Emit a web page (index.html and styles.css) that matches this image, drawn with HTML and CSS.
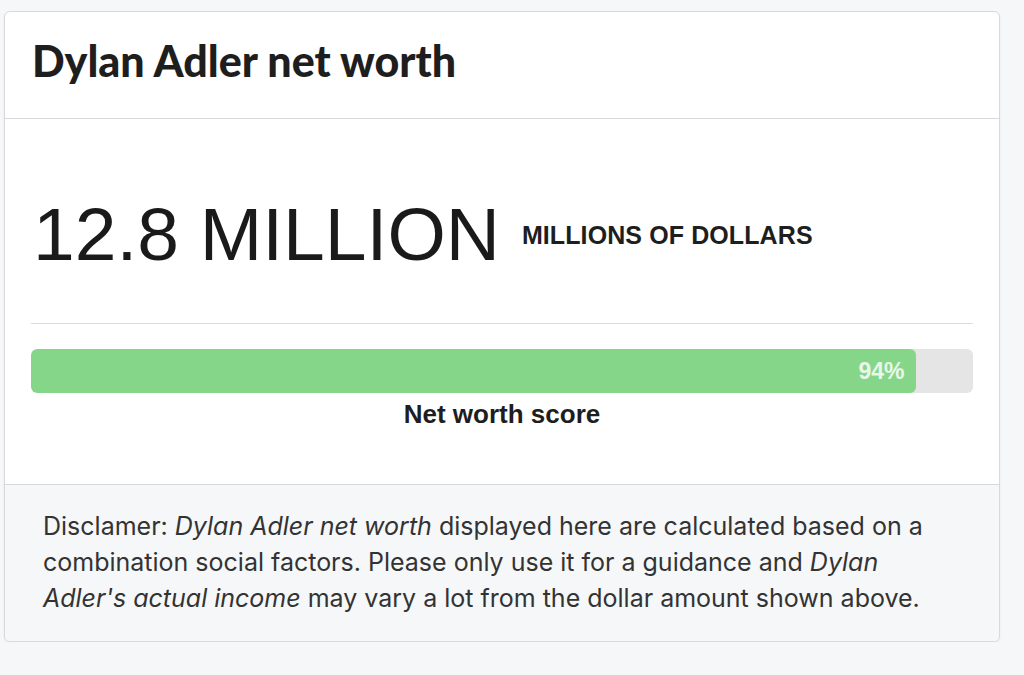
FILE: index.html
```html
<!DOCTYPE html>
<html>
<head>
<meta charset="utf-8">
<link rel="stylesheet" href="styles.css">
</head>
<body>
<div class="card">
  <div class="card-header">
    <h1 class="title">Dylan Adler net worth</h1>
  </div>
  <div class="card-body">
    <div class="amount-row">
      <span class="amount">12.8 MILLION</span>
      <span class="unit">MILLIONS OF DOLLARS</span>
    </div>
    <div class="divider"></div>
    <div class="progress">
      <div class="progress-fill" style="width: 94%"><span class="progress-label">94%</span></div>
    </div>
    <div class="score-label">Net worth score</div>
  </div>
  <div class="card-footer">
    <p class="disclaimer">Disclamer: <em>Dylan Adler net worth</em> displayed here are calculated based on a combination social factors. Please only use it for a guidance and <em>Dylan Adler's actual income</em> may vary a lot from the dollar amount shown above.</p>
  </div>
</div>
</body>
</html>
```
FILE: styles.css
```css
html, body {
  margin: 0;
  padding: 0;
  background: #f6f7f9;
}
body {
  padding: 11px 24px 0 4px;
  font-family: "Liberation Sans", Arial, sans-serif;
  color: #1c1c1c;
}
.card {
  width: 996px;
  box-sizing: border-box;
  background: #fff;
  border: 1px solid #d9d9dc;
  border-radius: 6px;
  box-shadow: 0 1px 2px rgba(0,0,0,0.08);
  overflow: hidden;
}
.card-header {
  height: 107px;
  box-sizing: border-box;
  padding: 0 28px 10px 27px;
  display: flex;
  align-items: center;
  border-bottom: 1px solid #d9d9dc;
}
.title {
  margin: 0;
  font-family: Lato, "Liberation Sans", sans-serif;
  font-weight: 900;
  font-size: 43px;
  letter-spacing: 0;
  color: #1e1e1e;
}
.card-body {
  padding: 75px 26px 54px 26px;
}
.amount-row {
  display: flex;
  align-items: center;
  gap: 22px;
  padding: 0 0 0 2px;
  height: 80px;
}
.amount {
  font-size: 75px;
  line-height: 80px;
  color: #1a1a1a;
}
.unit {
  font-weight: bold;
  font-size: 25px;
  letter-spacing: 0.1px;
  color: #1e1e1e;
  padding-top: 3px;
}
.divider {
  margin-top: 49px;
  height: 1px;
  background: #dcdcdc;
}
.progress {
  margin-top: 25px;
  height: 44px;
  background: #e5e5e5;
  border-radius: 6px;
  overflow: hidden;
}
.progress-fill {
  height: 100%;
  background: #86d68a;
  border-radius: 6px;
  display: flex;
  align-items: center;
  justify-content: flex-end;
  padding-right: 12px;
  box-sizing: border-box;
}
.progress-label {
  color: #e9f7ea;
  font-weight: bold;
  font-size: 23px;
}
.score-label {
  text-align: center;
  margin-top: 6px;
  font-weight: bold;
  font-size: 26px;
  letter-spacing: 0;
  color: #1e1e1e;
}
.card-footer {
  background: #f6f7f9;
  border-top: 1px solid #d9d9dc;
  padding: 23px 38px 25px 38px;
}
.disclaimer {
  margin: 0;
  font-family: Inter, "Liberation Sans", sans-serif;
  font-size: 25px;
  line-height: 36px;
  color: #333;
}
.disclaimer em {
  font-style: italic;
}
```
